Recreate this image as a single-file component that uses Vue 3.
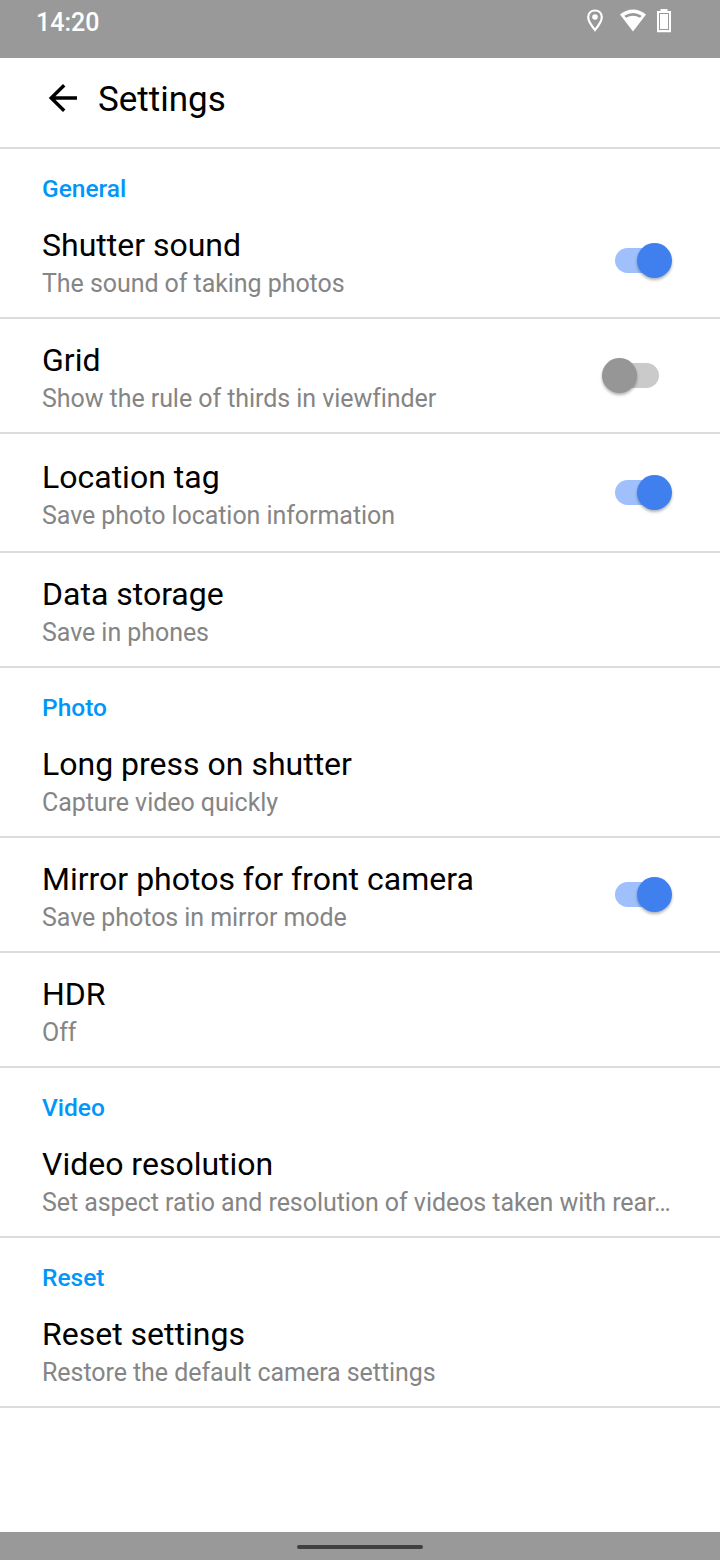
<script setup>
const rows = [
  { head: 'General', title: 'Shutter sound', sub: 'The sound of taking photos', sw: 'on' },
  { title: 'Grid', sub: 'Show the rule of thirds in viewfinder', sw: 'off' },
  { title: 'Location tag', sub: 'Save photo location information', sw: 'on', roomy: true },
  { title: 'Data storage', sub: 'Save in phones' },
  { head: 'Photo', title: 'Long press on shutter', sub: 'Capture video quickly' },
  { title: 'Mirror photos for front camera', sub: 'Save photos in mirror mode', sw: 'on' },
  { title: 'HDR', sub: 'Off' },
  { head: 'Video', title: 'Video resolution', sub: 'Set aspect ratio and resolution of videos taken with rear…' },
  { head: 'Reset', title: 'Reset settings', sub: 'Restore the default camera settings' },
]
</script>

<template>
  <div class="screen">
    <div class="status">
      <span class="time">14:20</span>
      <svg class="icons" width="90" height="30" viewBox="585 5 90 30">
        <path d="M595 10.500C590.800 10.500 588.200 13.600 588.200 17.300C588.200 21.800 592.200 26.600 595 30C597.800 26.600 601.800 21.800 601.800 17.300C601.800 13.600 599.200 10.500 595 10.500Z" fill="none" stroke="#fff" stroke-width="2.200" />
        <circle cx="595" cy="17" r="2.800" fill="#fff" />
        <path d="M620 14.500Q633 4.500 646 14.500L633 31.500Z" fill="#fff" />
        <path d="M624.300 15.800Q633 10 641.700 15.800L640 17.800Q633 13.500 626 17.800Z" fill="#999" />
        <path d="M660.500 9h7v2h3.500v21.300h-14V11h3.500z" fill="#fff" />
        <rect x="659.500" y="13.500" width="9" height="16" fill="none" stroke="#999" stroke-width="1" />
      </svg>
    </div>
    <header class="bar">
      <svg class="back" width="30" height="30" viewBox="48 83 30 30"><path d="M77 98H51M64.200 85.300L51.200 98L64.200 110.700" fill="none" stroke="#000" stroke-width="3.400" /></svg>
      <h1>Settings</h1>
    </header>
    <main>
      <section v-for="r in rows" :key="r.title" class="row" :class="{ roomy: r.roomy }">
        <h2 v-if="r.head">{{ r.head }}</h2>
        <div class="body">
          <div class="copy">
            <div class="title">{{ r.title }}</div>
            <div class="sub">{{ r.sub }}</div>
          </div>
          <span v-if="r.sw" class="switch" :class="r.sw"><i></i></span>
        </div>
      </section>
    </main>
    <footer><span></span></footer>
  </div>
</template>

<style scoped>
.screen { width: 720px; height: 1560px; display: flex; flex-direction: column; background: #fff; font-family: Roboto, sans-serif; overflow: hidden; }
.status { height: 58px; flex: none; box-sizing: border-box; background: #999; display: flex; justify-content: space-between; align-items: flex-start; padding: 5px 45px 0 36px; }
.time { font-size: 25px; line-height: 36px; font-weight: 500; color: #fff; }
.bar { height: 91px; flex: none; box-sizing: border-box; border-bottom: 2px solid #dcdcdc; display: flex; align-items: flex-start; padding: 25px 48px 0; }
h1 { margin: -4px 0 0 20px; font-size: 35px; line-height: 42px; font-weight: 400; color: #000; }
main { flex: 1; }
.row { box-sizing: border-box; padding: 22px 48px 19px 42px; border-bottom: 2px solid #dcdcdc; }
.row.roomy { padding: 24px 48px 21px 42px; }
h2 { margin: 4px 0 23px; font-size: 24.5px; line-height: 28px; font-weight: 500; color: #0096fa; }
.body { display: flex; justify-content: space-between; align-items: flex-start; }
.title { font-size: 32px; line-height: 38px; color: #000; white-space: nowrap; }
.sub { margin-top: 6px; font-size: 25px; line-height: 28px; letter-spacing: -.06px; color: #858585; white-space: nowrap; }
.switch { position: relative; flex: none; width: 57px; height: 35px; margin-top: 17px; display: flex; align-items: center; }
.switch.on { justify-content: flex-end; }
.switch::before { content: ""; position: absolute; top: 5px; left: 0; width: 44px; height: 25px; border-radius: 12.5px; background: #a0c0fb; }
.switch.off { margin-right: 13px; }
.switch.off::before { left: auto; right: 0; background: #cacaca; }
.switch i { position: relative; width: 35px; height: 35px; border-radius: 50%; background: #4080ee; box-shadow: 0 2px 3px rgba(0, 0, 0, .3); }
.switch.off i { background: #969696; }
footer { height: 28px; flex: none; background: #999; display: flex; justify-content: center; align-items: flex-start; }
footer span { width: 126px; height: 4px; margin-top: 13px; border-radius: 2px; background: #404040; }
</style>
